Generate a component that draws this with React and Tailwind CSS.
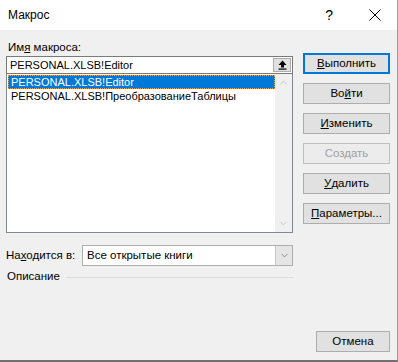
import { ChevronDown, ChevronUp } from "lucide-react"

const font = { fontFamily: '"Liberation Sans", Arial, sans-serif' }

function Btn({ children, primary, disabled, className = "w-[87px]" }) {
    let look = "border border-[#adadad] bg-[#e1e1e1] text-black"
    if (primary) look = "border-2 border-[#0078d7] bg-[#e1e1e1] text-black"
    if (disabled) look = "border border-[#bfbfbf] bg-[#ececec] text-[#a0a0a0]"
    return (
        <div className={`h-[21px] flex items-center justify-center text-[11.5px] leading-none ${look} ${className}`}>
            {children}
        </div>
    )
}

export default function App() {
    return (
        <div className="w-[398px] h-[362px] bg-[#f0f0f0] flex flex-col border-r border-[#9a9a9a] border-b-2 border-b-[#707070] text-[11.5px] text-black overflow-hidden" style={font}>
            <div className="h-[30px] bg-white flex items-center shrink-0">
                <span className="ml-[8px] text-[12px]">Макрос</span>
                <span className="ml-auto text-[14px]">?</span>
                <svg width="12" height="12" viewBox="0 0 12 12" className="ml-[36px] mr-[16px]">
                    <path d="M0.5 0.5 L11.5 11.5 M11.5 0.5 L0.5 11.5" stroke="black" strokeWidth="1" fill="none" />
                </svg>
            </div>

            <div className="flex flex-1">
                {/* left column */}
                <div className="w-[287px] shrink-0 ml-[6px] flex flex-col">
                    <div className="mt-[9px] h-[16px] leading-[16px] ml-[2px]">
                        Им<span className="underline">я</span> макроса:
                    </div>
                    <div className="mt-[1px] h-[18px] bg-white border border-[#7a7a7a] flex items-center text-[11px]">
                        <span className="ml-[3px]">PERSONAL.XLSB!Editor</span>
                        <div className="ml-auto mr-[1px] w-[18px] h-[14px] bg-[#e1e1e1] border border-[#adadad] flex items-center justify-center">
                            <svg width="9" height="10" viewBox="0 0 9 10">
                                <path d="M4.5 0.5 L8.5 5 L6 5 L6 7.5 L3 7.5 L3 5 L0.5 5 Z" fill="black" />
                                <rect x="0.5" y="8.5" width="8" height="1.2" fill="black" />
                            </svg>
                        </div>
                    </div>
                    <div className="h-[159px] bg-white border border-[#828790] border-t-0 flex text-[11px]">
                        <div className="flex-1 pt-[1px] pl-[1px]">
                            <div className="h-[14px] bg-[#0078d7] text-white border border-dotted border-[#f3a13b] flex items-center pl-[2px]">
                                PERSONAL.XLSB!Editor
                            </div>
                            <div className="h-[14px] flex items-center pl-[3px]">
                                PERSONAL.XLSB!ПреобразованиеТаблицы
                            </div>
                        </div>
                        <div className="w-[17px] bg-[#f0f0f0] flex flex-col items-center justify-between py-[3px]">
                            <ChevronUp size={11} strokeWidth={2} className="text-[#c2c2c2]" />
                            <ChevronDown size={11} strokeWidth={2} className="text-[#c2c2c2]" />
                        </div>
                    </div>
                    <div className="mt-[12px] h-[21px] flex items-center">
                        <span className="w-[76px]">
                            На<span className="underline">х</span>одится в:
                        </span>
                        <div className="flex-1 h-[21px] bg-white border border-[#adadad] flex items-center">
                            <span className="ml-[4px]">Все открытые книги</span>
                            <div className="ml-auto w-[17px] h-full bg-[#e5e5e5] border-l border-[#c7c7c7] flex items-center justify-center">
                                <ChevronDown size={11} strokeWidth={1.3} className="text-[#555]" />
                            </div>
                        </div>
                    </div>
                    <div className="mt-[2px] h-[18px] flex items-center">
                        <span className="ml-[1px]">Описание</span>
                        <div className="flex-1 ml-[6px] h-px bg-[#dcdcdc]" />
                    </div>
                </div>

                {/* right column */}
                <div className="ml-[10px] w-[87px] shrink-0 flex flex-col pt-[23px] gap-[9px]">
                    <Btn primary><span className="underline">В</span>ыполнить</Btn>
                    <Btn>Во<span className="underline">й</span>ти</Btn>
                    <Btn><span className="underline">И</span>зменить</Btn>
                    <Btn disabled>Создать</Btn>
                    <Btn><span className="underline">У</span>далить</Btn>
                    <Btn><span className="underline">П</span>араметры...</Btn>
                    <Btn className="mt-[98px] ml-[13px] w-[74px]">Отмена</Btn>
                </div>
            </div>
        </div>
    )
}
